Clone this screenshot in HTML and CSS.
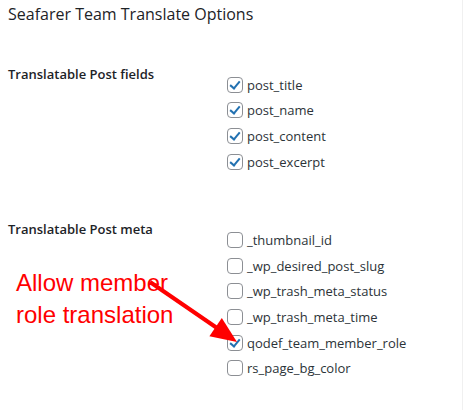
FILE: index.html
```html
<!DOCTYPE html>
<html lang="en">
<head>
    <meta charset="UTF-8">
    <title>Seafarer Team Translate Options</title>
    <link rel="stylesheet" href="styles.css">
</head>
<body>
    <div class="wrap">
        <h2 class="page-title">Seafarer Team Translate Options</h2>

        <!-- Post fields -->
        <div class="option-row">
            <div class="option-label">Translatable Post fields</div>
            <ul class="check-list">
                <li><span class="box checked"></span>post_title</li>
                <li><span class="box checked"></span>post_name</li>
                <li><span class="box checked"></span>post_content</li>
                <li><span class="box checked"></span>post_excerpt</li>
            </ul>
        </div>

        <!-- Post meta -->
        <div class="option-row meta-row">
            <div class="option-label">Translatable Post meta</div>
            <ul class="check-list">
                <li><span class="box"></span>_thumbnail_id</li>
                <li><span class="box"></span>_wp_desired_post_slug</li>
                <li><span class="box"></span>_wp_trash_meta_status</li>
                <li><span class="box"></span>_wp_trash_meta_time</li>
                <li><span class="box checked"></span>qodef_team_member_role</li>
                <li><span class="box"></span>rs_page_bg_color</li>
            </ul>
        </div>

        <!-- Annotation -->
        <div class="note">Allow member<br>role translation</div>
        <svg class="arrow" width="110" height="80" viewBox="0 0 110 80">
            <line x1="10" y1="10" x2="77" y2="56" stroke="#f00" stroke-width="4"/>
            <polygon points="97,70 69.4,64.3 81.8,46.1" fill="#f00"/>
        </svg>
    </div>
</body>
</html>
```

FILE: styles.css
```css
body {
    margin: 0;
    background: #fff;
    font-family: "Open Sans", sans-serif;
    color: #2c3338;
}
.wrap {
    padding: 2px 8px 0 8px;
    position: relative;
    min-height: 408px;
    border-right: 1px solid #f0f0f0;
}
.page-title {
    font-size: 16px;
    font-weight: 500;
    color: #1d2327;
    margin: 0;
    line-height: 24px;
}
.option-row {
    display: flex;
    margin-top: 38px;
}
.meta-row {
    margin-top: 45px;
}
.option-label {
    width: 219px;
    font-size: 13px;
    font-weight: 600;
    color: #1d2327;
    line-height: 20px;
}
.check-list {
    list-style: none;
    margin: 0;
    padding: 8px 0 0 0;
}
.check-list li {
    display: flex;
    align-items: center;
    height: 25.6px;
    font-size: 13px;
    color: #2c3338;
}
.box {
    width: 14px;
    height: 14px;
    border: 1px solid #8c8f94;
    border-radius: 4px;
    margin-right: 4px;
    position: relative;
    box-sizing: content-box;
}
.box.checked::after {
    content: "";
    position: absolute;
    left: 4px;
    top: 1px;
    width: 4px;
    height: 8px;
    border: solid #2271b1;
    border-width: 0 2.5px 2.5px 0;
    transform: rotate(40deg);
}
.note {
    position: absolute;
    left: 16px;
    top: 267px;
    font-family: "Liberation Sans", Arial, sans-serif;
    font-size: 24px;
    line-height: 32px;
    color: #f00;
}
.arrow {
    position: absolute;
    left: 140px;
    top: 272px;
}
```
